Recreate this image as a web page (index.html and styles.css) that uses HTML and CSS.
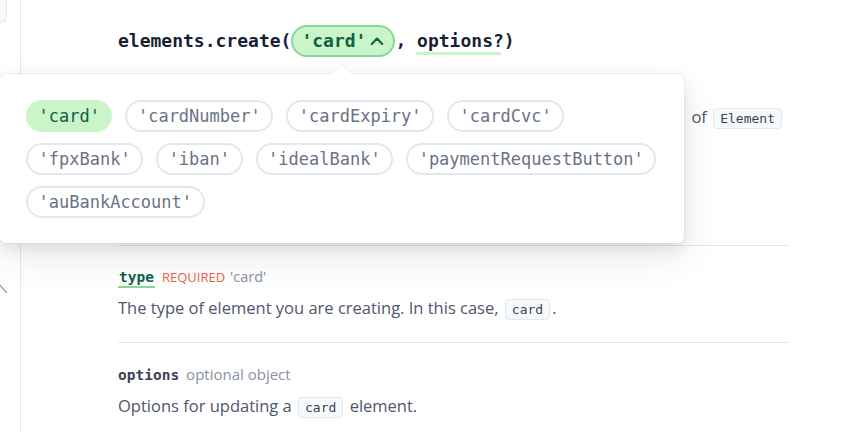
FILE: index.html
```html
<!DOCTYPE html>
<html lang="en">
<head>
<meta charset="utf-8">
<title>elements.create</title>
<link rel="stylesheet" href="styles.css">
</head>
<body>
<div class="page">
  <aside class="rail">
    <div class="rail-tab"></div>
    <svg class="rail-chevron" width="20" height="16" viewBox="0 0 20 16" aria-hidden="true">
      <path d="M-2 2 L6.5 11.5" fill="none" stroke="#a3acb9" stroke-width="1.6" stroke-linecap="round"/>
    </svg>
  </aside>

  <main class="content">
    <div class="signature">
      <span class="sig-text">elements.create(</span>
      <button class="type-pill" type="button">'card'<svg width="14" height="10" viewBox="0 0 14 10" aria-hidden="true"><path d="M1.8 8 L7 2.6 L12.2 8" fill="none" stroke="#0e6245" stroke-width="2.2" stroke-linecap="round" stroke-linejoin="round"/></svg></button>
      <span class="sig-text">, </span>
      <span class="sig-text sig-param">options?</span>
      <span class="sig-text">)</span>
    </div>

    <p class="intro">of <code class="inline-code">Element</code></p>

    <section class="param">
      <div class="param-head"><code class="param-name is-required">type</code><span class="badge-required">Required</span><span class="param-type">'card'</span></div>
      <p class="param-desc">The type of element you are creating. In this case, <code class="inline-code">card</code>.</p>
    </section>

    <section class="param">
      <div class="param-head"><code class="param-name">options</code><span class="param-type param-type-lg">optional object</span></div>
      <p class="param-desc">Options for updating a <code class="inline-code">card</code> element.</p>
    </section>
  </main>

  <div class="popover">
    <button class="chip is-selected" type="button">'card'</button>
    <button class="chip" type="button">'cardNumber'</button>
    <button class="chip" type="button">'cardExpiry'</button>
    <button class="chip" type="button">'cardCvc'</button>
    <button class="chip" type="button">'fpxBank'</button>
    <button class="chip" type="button">'iban'</button>
    <button class="chip" type="button">'idealBank'</button>
    <button class="chip" type="button">'paymentRequestButton'</button>
    <button class="chip" type="button">'auBankAccount'</button>
  </div>
</div>
</body>
</html>
```

FILE: styles.css
```css
html, body {
  margin: 0;
  padding: 0;
  background: #ffffff;
}

body {
  font-family: "Open Sans", "Noto Sans", sans-serif;
  color: #4f566b;
  overflow: hidden;
}

.page {
  position: relative;
  display: flex;
  width: 866px;
  height: 432px;
}

/* left rail */
.rail {
  flex-shrink: 0;
  width: 20px;
  border-right: 1px solid #e3e8ee;
  display: flex;
  flex-direction: column;
}

.rail-tab {
  width: 6px;
  height: 22px;
  background: #f7fafc;
  border-right: 1px solid #e3e8ee;
  border-bottom: 1px solid #e3e8ee;
  border-bottom-right-radius: 6px;
}

.rail-chevron {
  display: block;
  margin-top: 258px;
}

/* main column */
.content {
  padding: 25px 0 0 97px;
  width: 672px;
}

.signature {
  display: flex;
  align-items: center;
  height: 32px;
  font-family: "DejaVu Sans Mono", monospace;
  font-size: 18px;
  font-weight: 700;
  color: #1a1f36;
}

.sig-text {
  white-space: pre;
  line-height: 32px;
}

.sig-param {
  position: relative;
}

.sig-param::after {
  content: "";
  position: absolute;
  left: -1px;
  top: 27px;
  width: 85px;
  height: 3px;
  background: #cbf4c9;
}

.type-pill {
  display: inline-flex;
  align-items: center;
  height: 32px;
  box-sizing: border-box;
  margin: 0;
  padding: 0 9px 0 8px;
  border: 2px solid #85d996;
  border-radius: 16px;
  background: #cbf4c9;
  color: #0e6245;
  font: inherit;
  line-height: 28px;
  cursor: pointer;
}

.type-pill svg {
  display: block;
  margin-left: 4px;
}

.intro {
  margin: 48px 0 116px;
  padding-right: 6px;
  text-align: right;
  white-space: nowrap;
  font-size: 16.5px;
  line-height: 24px;
}

.inline-code {
  font-family: "DejaVu Sans Mono", monospace;
  font-size: 13px;
  line-height: 1;
  padding: 2px 6px;
  margin: 0 2px;
  background: #f7fafc;
  border: 1px solid #e3e8ee;
  border-radius: 4px;
  color: #3c4257;
}

/* parameters */
.param {
  border-top: 1px solid #e3e8ee;
  padding: 21px 0 22px;
}

.param-head {
  font-size: 14.5px;
  line-height: 20px;
  white-space: nowrap;
}

.param-name {
  font-family: "DejaVu Sans Mono", monospace;
  font-size: 14.5px;
  font-weight: 700;
  color: #3c4257;
}

.param-name.is-required {
  color: #0e6245;
  padding: 0 1px 1px;
  border-bottom: 2px solid #85d996;
}

.badge-required {
  margin-left: 7px;
  font-size: 13px;
  text-transform: uppercase;
  color: #e5674b;
}

.param-type {
  margin-left: 5px;
  color: #8792a2;
}

.param-type-lg {
  margin-left: 7px;
  font-size: 15px;
}

.param-desc {
  margin: 9px 0 0;
  font-size: 16.5px;
  line-height: 24px;
}

/* popover */
.popover {
  position: absolute;
  left: 0;
  top: 74px;
  width: 684px;
  box-sizing: border-box;
  padding: 26px 26px 25px;
  display: flex;
  flex-wrap: wrap;
  gap: 11px 13px;
  background: #ffffff;
  border-radius: 6px;
  box-shadow: 0 0 0 1px rgba(136, 152, 170, 0.1),
              0 15px 35px rgba(49, 49, 93, 0.1),
              0 5px 15px rgba(0, 0, 0, 0.08);
}

.popover::before {
  content: "";
  position: absolute;
  left: 335px;
  top: -7px;
  width: 14px;
  height: 14px;
  background: #ffffff;
  border-radius: 3px 0 0 0;
  transform: rotate(45deg);
  box-shadow: -1px -1px 1px rgba(0, 0, 0, 0.05);
}

.chip {
  height: 32px;
  box-sizing: border-box;
  margin: 0;
  padding: 0 10.5px;
  border: 2px solid #e3e8ee;
  border-radius: 16px;
  background: #ffffff;
  font-family: "DejaVu Sans Mono", monospace;
  font-size: 17px;
  font-weight: 400;
  line-height: 28px;
  color: #697386;
  cursor: pointer;
}

.chip.is-selected {
  background: #cbf4c9;
  border-color: #cbf4c9;
  color: #0e6245;
}
```
